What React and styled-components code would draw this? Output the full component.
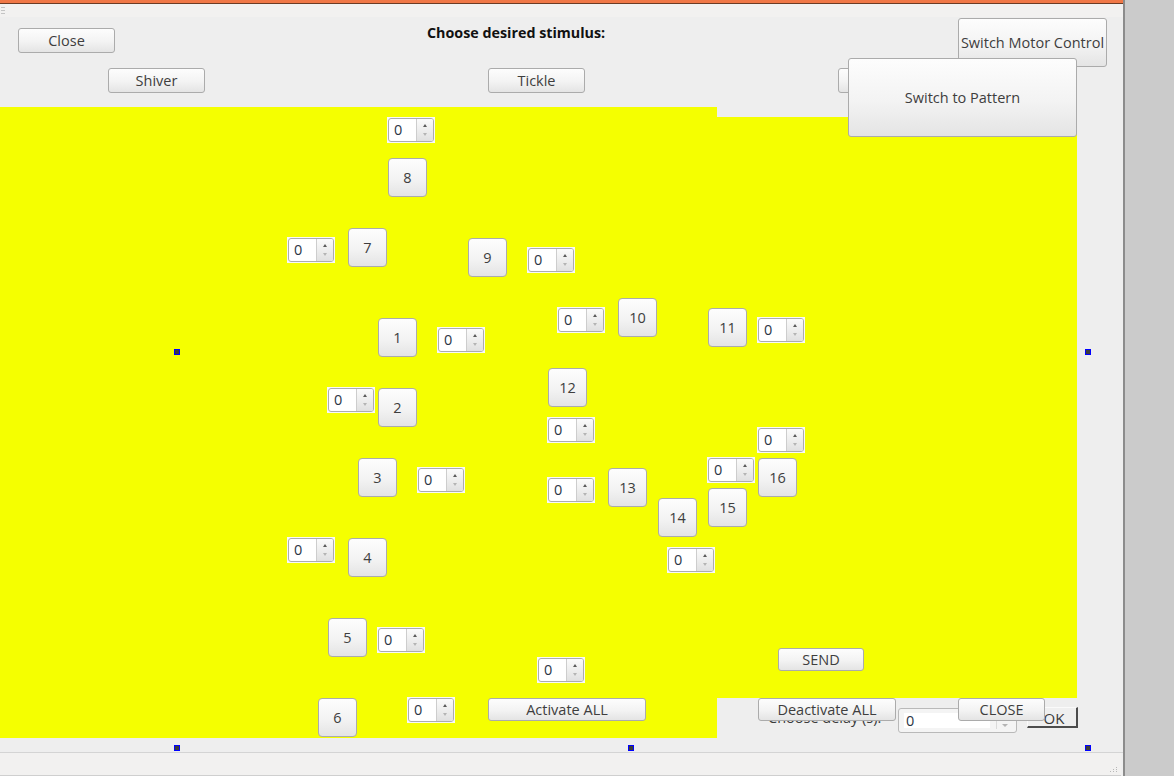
import React from "react"
import styled, { createGlobalStyle, css } from "styled-components"

// the form canvas starts below the title strip and the grip strip
const TOP = 17

const GlobalStyle = createGlobalStyle`
  html, body {
    margin: 0;
    padding: 0;
    width: 1174px;
    height: 776px;
    overflow: hidden;
    background: #cbcbcb;
  }
  body {
    font-family: "Open Sans", "DejaVu Sans", sans-serif;
  }
`

const placed = css`
  position: absolute;
  left: ${p => p.$x}px;
  top: ${p => p.$y - TOP}px;
  box-sizing: border-box;
`

const Screen = styled.div`
  display: flex;
  width: 1174px;
  height: 776px;
`
const Window = styled.div`
  display: flex;
  flex-direction: column;
  width: 1123px;
  border-right: 2px solid #8c8c8c;
  background: #efefef;
`
const Desktop = styled.div`
  flex: 1;
  background: #cbcbcb;
`
const TitleBar = styled.div`
  height: 3px;
  background: #f07746;
  border-bottom: 1px solid #6b3b24;
`
const GripStrip = styled.div`
  display: flex;
  flex-direction: column;
  justify-content: center;
  gap: 2px;
  height: 13px;
  padding-left: 1px;
  background: #f2f1f0;
`
const GripLine = styled.span`
  width: 4px;
  height: 1px;
  background: #c4c4c4;
`
const Canvas = styled.div`
  position: relative;
  flex: 1;
  overflow: hidden;
  background: #eeeeee;
  border-bottom: 1px solid #d4d4d4;
`
const StatusBar = styled.div`
  display: flex;
  justify-content: flex-end;
  align-items: flex-end;
  height: 23px;
  margin-right: 2px;
  padding: 0 3px 3px 0;
  box-sizing: border-box;
  background: #f2f1f0;
  border-bottom: 1px solid #cfcfcf;
`
const SizeGrip = styled.div`
  display: grid;
  grid-template-columns: repeat(3, 2px);
  gap: 1px;
`
const GripDot = styled.span`
  width: 1px;
  height: 1px;
  background: ${p => (p.$on ? "#b8b8b8" : "transparent")};
`

const YellowPanel = styled.div`
  ${placed}
  width: ${p => p.$w}px;
  height: ${p => p.$h}px;
  background: #f5ff00;
`

const Heading = styled.div`
  ${placed}
  font-size: 14.3px;
  font-weight: 700;
  line-height: 16px;
  color: #111;
  white-space: nowrap;
`

const PushButton = styled.button`
  ${placed}
  width: ${p => p.$w}px;
  height: ${p => p.$h}px;
  margin: 0;
  padding: 0;
  border: 1px solid #ababab;
  border-radius: ${p => (p.$square ? 4 : 3)}px;
  background: linear-gradient(#fdfdfd, #f3f3f3 55%, #e4e4e4);
  font-family: "Open Sans", "DejaVu Sans", sans-serif;
  font-size: 14.5px;
  color: #3e3e3e;
  white-space: nowrap;
  overflow: hidden;
`

const FlatButton = styled.button`
  ${placed}
  width: 51px;
  height: 21px;
  margin: 0;
  padding: 0 0 0 4px;
  border: 1px solid;
  border-color: #fafafa #4c4c4c #4c4c4c #fafafa;
  border-width: 1px 2px 2px 1px;
  background: #efefef;
  font-family: "Open Sans", "DejaVu Sans", sans-serif;
  font-size: 15px;
  color: #3a3a3a;
`

const SpinFrame = styled.div`
  ${placed}
  width: 48px;
  height: 26px;
  padding: 1px;
  background: #f8f8f8;
`
const SpinBody = styled.div`
  display: flex;
  height: 100%;
  box-sizing: border-box;
  border: 1px solid #adadad;
  border-radius: 3px;
  background: #fff;
  overflow: hidden;
`
const SpinText = styled.span`
  flex: 1;
  padding-left: 5px;
  font-size: 14.5px;
  line-height: 22px;
  color: #2c3544;
`
const SpinArrows = styled.div`
  display: flex;
  flex-direction: column;
  align-items: center;
  justify-content: center;
  gap: 6px;
  width: 16px;
  border-left: 1px solid #cdcdcd;
  background: linear-gradient(#fbfbfb, #e0e0e0);
`
const Arrow = styled.span`
  width: 0;
  height: 0;
  border-left: 2.5px solid transparent;
  border-right: 2.5px solid transparent;
  ${p =>
    p.$up
      ? "border-bottom: 3px solid #5a5a5a;"
      : "border-top: 3px solid #b4b4b4;"}
`

const FieldLabel = styled.div`
  ${placed}
  font-size: 14.5px;
  line-height: 16px;
  color: #3a3a3a;
  white-space: nowrap;
`

const Combo = styled.div`
  ${placed}
  display: flex;
  align-items: center;
  width: 119px;
  height: 25px;
  padding: 3px 4px 3px 5px;
  border: 1px solid #b9b9b9;
  border-radius: 3px;
  background: #f4f4f4;
`
const ComboField = styled.span`
  flex: 1;
  height: 15px;
  padding-left: 2px;
  font-size: 14.5px;
  line-height: 16px;
  color: #2c3544;
  background: #fff;
`
const ComboArrow = styled.span`
  display: flex;
  justify-content: center;
  align-items: flex-end;
  width: 16px;
  height: 100%;
  margin-left: 6px;
  padding-bottom: 2px;
  box-sizing: border-box;
  border-left: 1px solid #dadada;
  &::after {
    content: "";
    border-left: 3px solid transparent;
    border-right: 3px solid transparent;
    border-top: 3px solid #b4b4b4;
  }
`

const Handle = styled.span`
  ${placed}
  width: 6px;
  height: 6px;
  border: 1px solid #0000ff;
  background: #3c3c3c;
`

const numberButtons = [
  ["8", 388, 158],
  ["7", 348, 228],
  ["9", 468, 238],
  ["10", 618, 298],
  ["11", 708, 308],
  ["1", 378, 318],
  ["12", 548, 368],
  ["2", 378, 388],
  ["3", 358, 458],
  ["13", 608, 468],
  ["16", 758, 458],
  ["15", 708, 488],
  ["14", 658, 498],
  ["4", 348, 538],
  ["5", 328, 618],
  ["6", 318, 698],
]

const spinBoxes = [
  [388, 118], [288, 238], [528, 248], [558, 308], [758, 318], [438, 328],
  [328, 388], [548, 418], [758, 428], [708, 458], [418, 468], [548, 478],
  [288, 538], [668, 548], [378, 628], [538, 658], [408, 698],
]

const handles = [[174, 349], [1085, 349], [174, 745], [628, 745], [1085, 745]]

const SpinBox = ({ x, y }) => (
  <SpinFrame $x={x - 1} $y={y - 1}>
    <SpinBody>
      <SpinText>0</SpinText>
      <SpinArrows>
        <Arrow $up />
        <Arrow />
      </SpinArrows>
    </SpinBody>
  </SpinFrame>
)

const App = () => {
  return (
    <Screen>
      <GlobalStyle />
      <Window>
        <TitleBar />
        <GripStrip>
          <GripLine />
          <GripLine />
          <GripLine />
        </GripStrip>
        <Canvas>
          <PushButton $x={18} $y={28} $w={97} $h={25}>Close</PushButton>
          <Heading $x={427} $y={25}>Choose desired stimulus:</Heading>
          <PushButton $x={108} $y={68} $w={97} $h={25}>Shiver</PushButton>
          <PushButton $x={488} $y={68} $w={97} $h={25}>Tickle</PushButton>
          <PushButton $x={838} $y={68} $w={97} $h={25}>Pattern</PushButton>

          <YellowPanel $x={0} $y={107} $w={717} $h={631} />
          <YellowPanel $x={700} $y={117} $w={377} $h={581} />

          <PushButton $x={958} $y={18} $w={149} $h={49}>Switch Motor Control</PushButton>
          <PushButton $x={848} $y={58} $w={229} $h={79}>Switch to Pattern</PushButton>

          {spinBoxes.map(([x, y]) => (
            <SpinBox key={`${x}-${y}`} x={x} y={y} />
          ))}
          {numberButtons.map(([label, x, y]) => (
            <PushButton key={label} $x={x} $y={y} $w={39} $h={39} $square>
              {label}
            </PushButton>
          ))}

          <PushButton $x={778} $y={648} $w={86} $h={23}>SEND</PushButton>
          <PushButton $x={488} $y={698} $w={158} $h={23}>Activate ALL</PushButton>

          <FieldLabel $x={768} $y={710}>Choose delay (s):</FieldLabel>
          <Combo $x={898} $y={708}>
            <ComboField>0</ComboField>
            <ComboArrow />
          </Combo>
          <FlatButton $x={1027} $y={707}>OK</FlatButton>
          <PushButton $x={758} $y={698} $w={138} $h={23}>Deactivate ALL</PushButton>
          <PushButton $x={958} $y={698} $w={87} $h={23}>CLOSE</PushButton>

          {handles.map(([x, y]) => (
            <Handle key={`${x}-${y}`} $x={x} $y={y} />
          ))}
        </Canvas>
        <StatusBar>
          <SizeGrip>
            {[0, 0, 1, 0, 1, 1, 1, 1, 1].map((on, i) => (
              <GripDot key={i} $on={on} />
            ))}
          </SizeGrip>
        </StatusBar>
      </Window>
      <Desktop />
    </Screen>
  )
}

export default App
